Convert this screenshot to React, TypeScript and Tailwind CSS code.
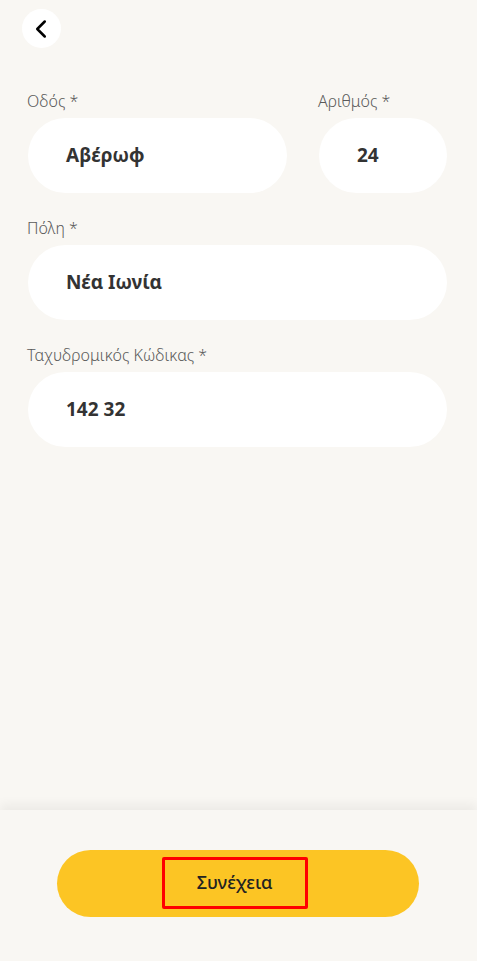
import { ChevronLeft } from 'lucide-react';

type FieldProps = {
    label: string;
    value: string;
};

function Field({ label, value }: FieldProps) {
    return (
        <div className="flex flex-col">
            <label className="text-[16px] leading-[22px] font-light text-[#5a5a5a] mb-[6px] -ml-px">{label}</label>
            <div className="h-[75px] rounded-full bg-white flex items-center pl-[38px]">
                <span className="text-[19px] font-bold text-[#333]">{value}</span>
            </div>
        </div>
    );
}

export default function App() {
    return (
        <div
            className="min-h-screen flex flex-col bg-[#f9f7f3]"
            style={{ fontFamily: '"Noto Sans", "Open Sans", sans-serif' }}
        >
            <div className="flex-1 flex flex-col pl-[28px] pr-[30px] pt-[9px]">
                {/* Back */}
                <button className="w-[39px] h-[39px] -ml-[6px] rounded-full bg-white flex items-center justify-center text-black">
                    <ChevronLeft size={30} strokeWidth={2} className="-ml-[2px]" />
                </button>

                {/* Address form */}
                <div className="mt-[42px] flex flex-col gap-[24px]">
                    <div className="grid grid-cols-[259px_128px] gap-x-[32px]">
                        <Field label="Οδός *" value="Αβέρωφ" />
                        <Field label="Αριθμός *" value="24" />
                    </div>
                    <Field label="Πόλη *" value="Νέα Ιωνία" />
                    <Field label="Ταχυδρομικός Κώδικας *" value="142 32" />
                </div>
            </div>

            {/* Bottom action */}
            <div className="h-[151px] shrink-0 bg-[#f9f7f3] shadow-[0_-6px_10px_rgba(0,0,0,0.05)] flex justify-center pt-[40px]">
                <button className="w-[362px] h-[67px] -ml-px rounded-full bg-[#fcc524] flex items-center justify-center">
                    <span className="w-[146px] h-[52px] -ml-[7px] -mt-[2px] border-[3px] border-[#ff0000] rounded-[2px] flex items-center justify-center text-[18px] font-medium text-[#222]">
                        Συνέχεια
                    </span>
                </button>
            </div>
        </div>
    );
}
